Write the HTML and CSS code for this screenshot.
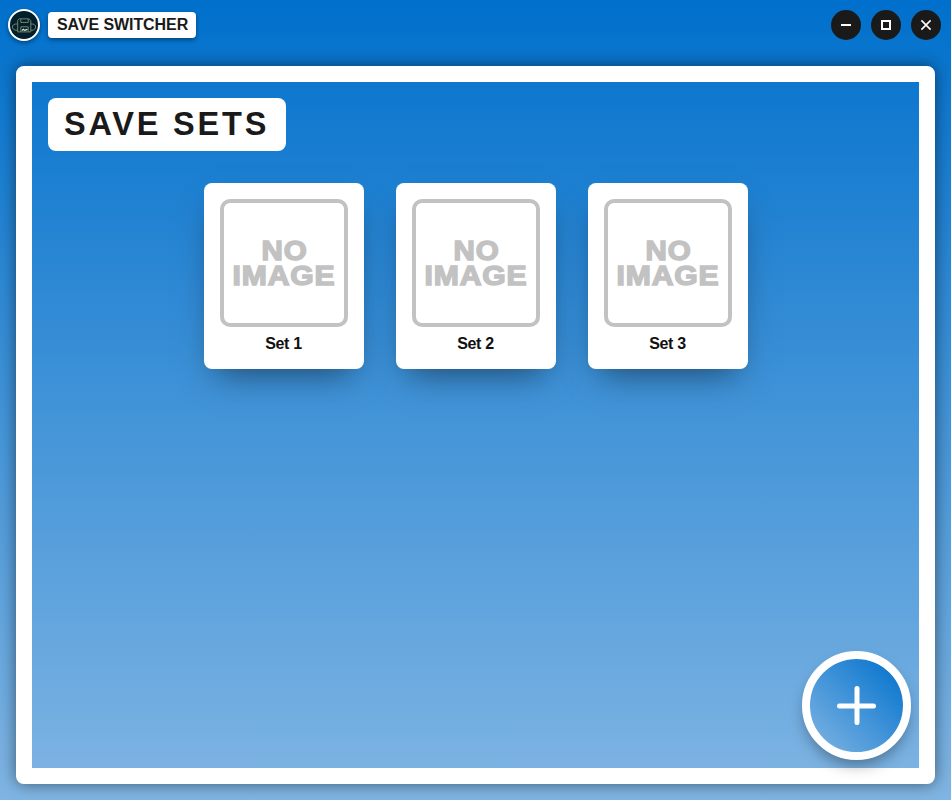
FILE: index.html
```
<!DOCTYPE html>
<html lang="en">
<head>
<meta charset="utf-8">
<title>Save Switcher</title>
<link rel="stylesheet" href="styles.css">
</head>
<body>
<header class="titlebar">
  <svg class="logo" viewBox="0 0 28 28">
    <path d="M7.5 13H5.2l-2.6 1.6v2.8l2.6 1.8h2.3M20.8 13h2.3l2.4 1.6v2.8l-2.4 1.8h-2.3"/>
    <path d="M9.2 7.8h9.6l2 1.8v11.3H7.7V9.3zM10.8 8v3.4h7.4V8"/>
    <path d="M10.8 20.6v-4.8h7.4v4.8"/>
    <path class="mark" d="M11.8 19.6l1.6-1.4 1.4 1.2 2.6-1"/>
  </svg>
  <div class="app-name">SAVE SWITCHER</div>
  <div class="controls">
    <div class="control"><svg viewBox="0 0 30 30"><path d="M10 15h10"/></svg></div>
    <div class="control"><svg viewBox="0 0 30 30"><path d="M11 11h8v8h-8z"/></svg></div>
    <div class="control"><svg viewBox="0 0 30 30"><path class="thin" d="M10.4 10.4l9.2 9.2m0-9.2l-9.2 9.2"/></svg></div>
  </div>
</header>
<main class="panel">
  <h1 class="heading">SAVE SETS</h1>
  <div class="sets">
    <div class="card">
      <svg class="thumb" viewBox="0 0 120 120"><text x="37.5" y="57" textLength="46" lengthAdjust="spacingAndGlyphs">NO</text><text x="8.5" y="82" textLength="103" lengthAdjust="spacingAndGlyphs">IMAGE</text></svg>
      <div class="label">Set 1</div>
    </div>
    <div class="card">
      <svg class="thumb" viewBox="0 0 120 120"><text x="37.5" y="57" textLength="46" lengthAdjust="spacingAndGlyphs">NO</text><text x="8.5" y="82" textLength="103" lengthAdjust="spacingAndGlyphs">IMAGE</text></svg>
      <div class="label">Set 2</div>
    </div>
    <div class="card">
      <svg class="thumb" viewBox="0 0 120 120"><text x="37.5" y="57" textLength="46" lengthAdjust="spacingAndGlyphs">NO</text><text x="8.5" y="82" textLength="103" lengthAdjust="spacingAndGlyphs">IMAGE</text></svg>
      <div class="label">Set 3</div>
    </div>
  </div>
  <div class="add"><svg viewBox="0 0 93 93"><path d="M47 29.5v34M29.5 47h34"/></svg></div>
</main>
</body>
</html>
```
FILE: styles.css
```
* { box-sizing: border-box; }
body {
  margin: 0;
  height: 800px;
  display: flex;
  flex-direction: column;
  overflow: hidden;
  font-family: "Liberation Sans", Arial, sans-serif;
  color: #1a1a1a;
  background: linear-gradient(#0070cc, #80b5e3);
}
.titlebar {
  height: 50px;
  display: flex;
  align-items: center;
  padding: 0 10px 0 8px;
}
.logo {
  width: 32px;
  height: 32px;
  border: 2px solid #fff;
  border-radius: 50%;
  background: #02202c;
  box-shadow: 0 2px 4px rgba(0, 0, 0, .4);
  fill: none;
  stroke: #7f8d74;
  stroke-width: .9;
}
.logo .mark {
  stroke: #e5ead9;
  stroke-width: 1.2;
}
.app-name {
  margin-left: 8px;
  width: 148px;
  height: 26px;
  padding-left: 9px;
  border-radius: 4px;
  background: #fff;
  font-size: 16px;
  font-weight: 700;
  line-height: 25px;
  letter-spacing: -.08px;
  white-space: nowrap;
  box-shadow: 0 2px 4px rgba(0, 0, 0, .4);
}
.controls {
  margin-left: auto;
  display: flex;
  gap: 10px;
}
.control {
  width: 30px;
  height: 30px;
  border-radius: 50%;
  background: #1a1a1a;
}
.control svg {
  display: block;
  fill: none;
  stroke: #fff;
  stroke-width: 2;
}
.control .thin { stroke-width: 1.6; }
.panel {
  position: relative;
  flex: 1;
  margin: 16px;
  padding: 16px;
  border: 16px solid #fff;
  border-radius: 8px;
  box-shadow: 0 0 16px rgba(0, 0, 0, .5);
}
.heading {
  margin: 0;
  width: 238px;
  height: 53px;
  padding-left: 16px;
  border-radius: 8px;
  background: #fff;
  font-size: 32.5px;
  line-height: 52px;
  letter-spacing: 2.8px;
  white-space: nowrap;
}
.sets {
  margin-top: 32px;
  display: flex;
  justify-content: center;
  gap: 32px;
}
.card {
  width: 160px;
  height: 186px;
  padding: 16px;
  border-radius: 8px;
  background: #fff;
  box-shadow: 0 16px 32px -12px rgba(0, 0, 0, .5);
}
.thumb {
  display: block;
  width: 128px;
  height: 128px;
  border: 4px solid #c2c2c2;
  border-radius: 10px;
  fill: #c2c2c2;
  stroke: #c2c2c2;
  stroke-width: 1.5;
  letter-spacing: .8px;
  font: 700 28px "Liberation Sans", Arial, sans-serif;
}
.label {
  margin-top: 8px;
  color: #111;
  font-size: 16px;
  font-weight: 700;
  line-height: 18px;
  letter-spacing: -.3px;
  text-align: center;
}
.add {
  position: absolute;
  right: 8px;
  bottom: 8px;
  width: 109px;
  height: 109px;
  border: 8px solid #fff;
  border-radius: 50%;
  background: linear-gradient(45deg, #80b5e3, #0070cc) padding-box;
  box-shadow: 0 8px 16px -4px rgba(0, 0, 0, .4);
}
.add svg {
  display: block;
  fill: none;
  stroke: #fff;
  stroke-width: 5;
  stroke-linecap: round;
}
```
